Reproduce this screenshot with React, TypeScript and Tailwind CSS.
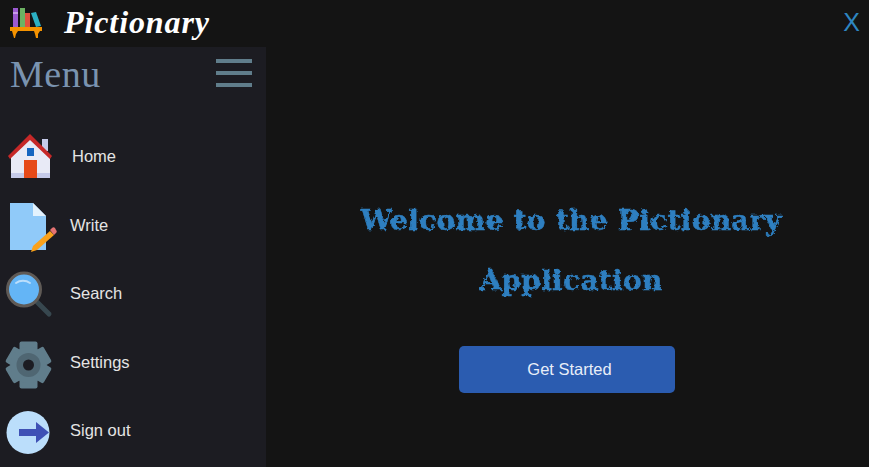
import React from 'react'

const BooksLogo = () => (
  <svg width="34" height="32" viewBox="0 0 34 32" className="shrink-0">
    <rect x="4" y="0" width="5" height="19" fill="#9b59d0" />
    <rect x="4" y="4" width="5" height="2" fill="#c79be8" />
    <rect x="11" y="0" width="5" height="19" fill="#6cb263" />
    <rect x="16" y="5" width="5" height="14" fill="#e0503f" />
    <path d="M22 5l5-1 5 14-5 1z" fill="#2bb0c4" />
    <rect x="1" y="19" width="32" height="4" fill="#f59300" />
    <path d="M3 23h6l-2 3-1 4H5zM25 23h6l-2 3v4h-2l-1-4z" fill="#f59300" />
  </svg>
)

const HomeIcon = () => (
  <svg width="70" height="60" viewBox="0 0 70 60">
    <rect x="42" y="12" width="6" height="12" fill="#c5cae9" />
    <path d="M11 29 30 10l20 19v22H11z" fill="#e8eaf6" />
    <rect x="11" y="46" width="39" height="5" fill="#c5cae9" />
    <path d="M8 29 30 7l22 22-2 3-20-19L10 32z" fill="#c62828" />
    <rect x="24" y="33" width="13" height="18" fill="#e64a19" />
    <rect x="27" y="21" width="7" height="8" fill="#1565c0" />
  </svg>
)

const WriteIcon = () => (
  <svg width="70" height="60" viewBox="0 0 70 60">
    <path d="M10 7h23l13 13v34H10z" fill="#90caf9" />
    <path d="M33 7l13 13H33z" fill="#e3f2fd" />
    <path d="M50 35l4 4-17 15-6 2 2-6z" fill="#f9a11b" />
    <path d="M50 34l2-2c1-1 2-1 3 0l1 2c1 1 1 2 0 3l-2 2z" fill="#e57373" />
  </svg>
)

const SearchIcon = () => (
  <svg width="70" height="60" viewBox="0 0 70 60">
    <path d="M36 37l13 13" stroke="#37474f" strokeWidth="5" strokeLinecap="round" />
    <circle cx="24" cy="25.5" r="16.5" fill="#64b5f6" stroke="#5f5a56" strokeWidth="3" />
    <path d="M16 19c4-3 10-3 14 0" fill="none" stroke="#bbdefb" strokeWidth="2" strokeLinecap="round" />
  </svg>
)

const SettingsIcon = () => (
  <svg width="70" height="60" viewBox="0 0 70 60">
    <rect x="19.5" y="8.5" width="18" height="47" rx="2" fill="#607d8b" />
    <rect x="19.5" y="10" width="18" height="44" rx="2" fill="#607d8b" transform="rotate(60 28.5 32)" />
    <rect x="19.5" y="10" width="18" height="44" rx="2" fill="#607d8b" transform="rotate(120 28.5 32)" />
    <circle cx="28.5" cy="32" r="18" fill="#607d8b" />
    <circle cx="28.5" cy="32" r="12" fill="#4f6672" />
    <circle cx="28.5" cy="32" r="5.5" fill="#1c1c22" />
  </svg>
)

const SignOutIcon = () => (
  <svg width="70" height="60" viewBox="0 0 70 60">
    <circle cx="28" cy="30.5" r="21.5" fill="#bbdefb" />
    <rect x="19" y="27" width="18" height="7" fill="#3f51b5" />
    <path d="M36 20l13 10.5L36 41z" fill="#3f51b5" />
  </svg>
)

const items = [
  { label: 'Home', icon: <HomeIcon />, labelClass: 'ml-[2px]' },
  { label: 'Write', icon: <WriteIcon />, labelClass: '' },
  { label: 'Search', icon: <SearchIcon />, labelClass: '' },
  { label: 'Settings', icon: <SettingsIcon />, labelClass: '' },
  { label: 'Sign out', icon: <SignOutIcon />, labelClass: '' },
]

export default function App() {
  return (
    <div className="flex h-[467px] w-[869px] flex-col overflow-hidden bg-[#141414] font-['Liberation_Sans',sans-serif]">
      {/* Rough edge for the welcome heading */}
      <svg width="0" height="0" className="absolute">
        <filter id="rough">
          <feTurbulence type="fractalNoise" baseFrequency="0.25" numOctaves="2" seed="4" />
          <feDisplacementMap in="SourceGraphic" scale="4" />
        </filter>
      </svg>

      {/* Title bar */}
      <div className="flex h-[47px] shrink-0 items-center justify-between pl-[9px] pr-[9px]">
        <div className="flex items-center">
          <BooksLogo />
          <span className="ml-[21px] mt-[-4px] font-['Liberation_Serif',serif] text-[32px] leading-none font-bold tracking-[0.9px] text-white italic">
            Pictionary
          </span>
        </div>
        <span className="mt-[-3px] text-[25px] leading-none text-[#2e86c1]">X</span>
      </div>

      <div className="flex min-h-0 flex-1">
        {/* Sidebar */}
        <aside className="w-[266px] shrink-0 bg-[#1c1c22]">
          <div className="flex h-[76px] items-start justify-between pl-[10px] pr-[14px] pt-[12px]">
            <span className="font-['Liberation_Serif',serif] text-[38px] leading-[30px] tracking-[0.5px] text-[#7a93b0]">
              Menu
            </span>
            <div className="flex w-[36px] flex-col gap-[8px]">
              <div className="h-[4px] bg-[#607d8b]" />
              <div className="h-[4px] bg-[#607d8b]" />
              <div className="h-[4px] bg-[#607d8b]" />
            </div>
          </div>
          <nav>
            {items.map(item => (
              <div key={item.label} className="flex h-[68.6px] items-center">
                {item.icon}
                <span className={`mt-[-2px] text-[16.5px] text-[#e4e4e4] ${item.labelClass}`}>{item.label}</span>
              </div>
            ))}
          </nav>
        </aside>

        {/* Main */}
        <main className="flex flex-1 flex-col items-center pt-[144px]">
          <h1 className="ml-[7px] text-center font-['DejaVu_Serif',serif] text-[28px] leading-[60px] font-bold tracking-[0.3px] text-[#2e7fc0] [-webkit-text-stroke:0.5px_#2e7fc0] [filter:url(#rough)]">
            Welcome to the Pictionary
            <br />
            Application
          </h1>
          <button className="mt-[35px] ml-[-1px] h-[47px] w-[216px] rounded-[5px] bg-[#2b5cb0] pl-[5px] text-[16.5px] text-[#e8eef8]">
            Get Started
          </button>
        </main>
      </div>
    </div>
  )
}
